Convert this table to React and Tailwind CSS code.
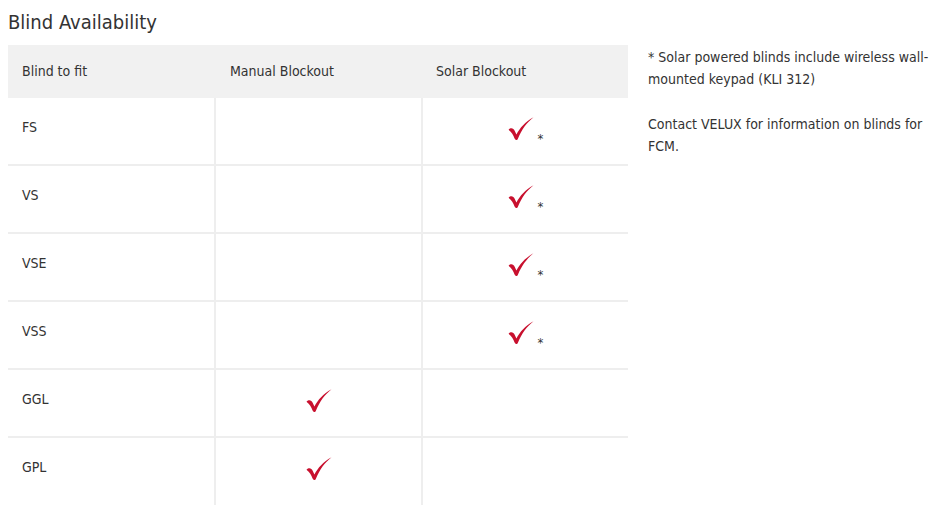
import React from "react";

const rows = [
  { name: "FS", manual: false, solar: true },
  { name: "VS", manual: false, solar: true },
  { name: "VSE", manual: false, solar: true },
  { name: "VSS", manual: false, solar: true },
  { name: "GGL", manual: true, solar: false },
  { name: "GPL", manual: true, solar: false },
];

function Check() {
  return (
    <svg width="26" height="24" viewBox="0 0 26 24" className="block">
      <path
        d="M0.5 12.8 C3 10.3 5.4 11.3 6.8 14 L8.4 17.4 C12 11 17 5 25.5 0.3 C18.5 6 13.8 12.5 10 21.5 C9.3 23.5 7.2 23.5 6.6 21.6 C5.2 18 3.8 15.2 0.5 12.8 Z"
        fill="#c8102e"
      />
    </svg>
  );
}

function Mark({ star }) {
  return (
    <div className="flex justify-center items-start pt-[19px]">
      <Check />
      {star && <span className="ml-[4px] mt-[15px] text-[13px] leading-none">*</span>}
    </div>
  );
}

export default function App() {
  return (
    <div
      className="bg-white text-[#333] px-2 pt-[8px]"
      style={{ fontFamily: '"DejaVu Sans Condensed", "Liberation Sans", sans-serif' }}
    >
      <h2 className="text-[20px] leading-[28px] mb-[9px]">Blind Availability</h2>
      <div className="flex gap-5">
        <div className="w-[620px] shrink-0 text-[14px]">
          <div className="grid grid-cols-[206px_207px_207px] bg-[#f1f1f1] h-[53px] items-center">
            <div className="pl-[14px]">Blind to fit</div>
            <div className="pl-[16px]">Manual Blockout</div>
            <div className="pl-[15px]">Solar Blockout</div>
          </div>
          {rows.map((r, i) => (
            <div
              key={r.name}
              className={
                i < rows.length - 1
                  ? "grid grid-cols-[206px_207px_207px] h-[68px] border-b-2 border-[#eeeeee]"
                  : "grid grid-cols-[206px_207px_207px] h-[67px]"
              }
            >
              <div className="pl-[14px] pt-[19px]">{r.name}</div>
              <div className="border-l-2 border-[#eeeeee]">{r.manual && <Mark />}</div>
              <div className="border-l-2 border-[#eeeeee]">{r.solar && <Mark star />}</div>
            </div>
          ))}
        </div>
        <div className="w-[295px] text-[14px] leading-[22px] pt-[1px]">
          <p>* Solar powered blinds include wireless wall-mounted keypad (KLI 312)</p>
          <p className="mt-[23px]">Contact VELUX for information on blinds for FCM.</p>
        </div>
      </div>
    </div>
  );
}
